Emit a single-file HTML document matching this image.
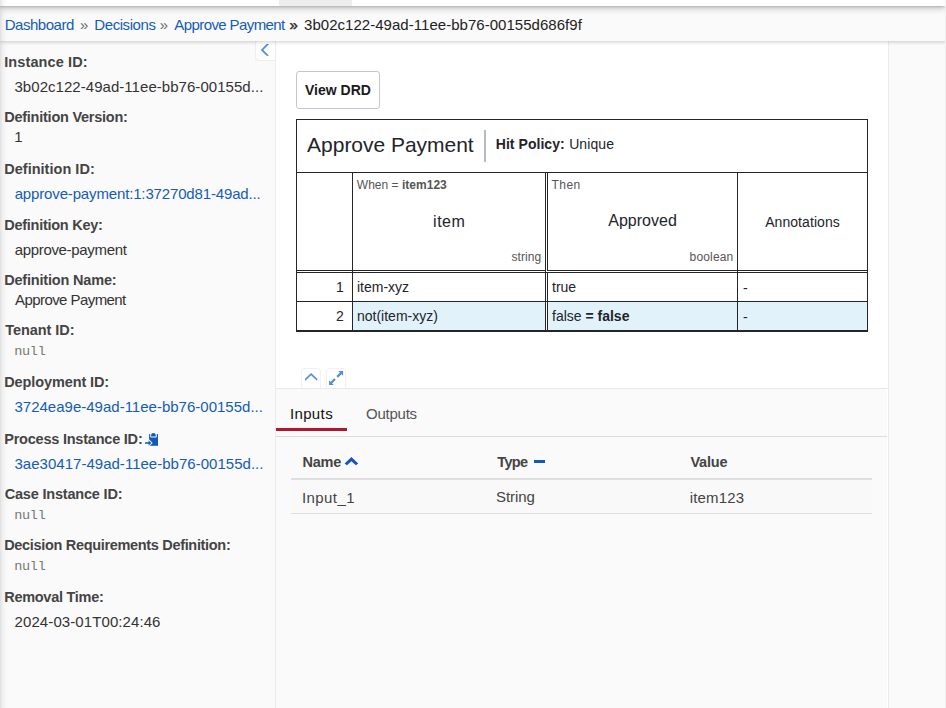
<!DOCTYPE html>
<html lang="en">
<head>
<meta charset="utf-8">
<title>Camunda Cockpit | Decision Instance</title>
<style>
html,body{margin:0;padding:0;}
body{width:946px;height:708px;overflow:hidden;position:relative;background:#fafafa;font-family:"Liberation Sans",Arial,sans-serif;font-size:15px;color:#333;}
a{color:#155cb5;text-decoration:none;}
.x{position:absolute;white-space:nowrap;z-index:50;}
.ln{position:absolute;display:block;z-index:45;}
.ic{position:absolute;z-index:50;}
#hdr{position:absolute;left:0;top:0;width:945px;height:6px;background:#fff;box-shadow:0 1px 3px rgba(0,0,0,.22),0 3px 6px rgba(0,0,0,.18);z-index:30;}
#hdr .act{position:absolute;left:279px;top:0;width:73px;height:6px;background:#eee;}
#crumbs{position:absolute;left:0;top:6px;width:946px;height:35px;background:#fafafa;box-shadow:0 1px 4px rgba(0,0,0,.2);z-index:20;}
.t{line-height:36px;font-size:15px;}
.t.g{color:#6a6a6a;}
.t.d{color:#222;}
.t.b{font-weight:bold;}
#side{position:absolute;left:0;top:41px;width:275px;height:667px;background:#fafafa;border-right:1px solid #ececec;z-index:5;}
#lsh{position:absolute;left:0;top:0;width:8px;height:708px;z-index:35;background:linear-gradient(to right,rgba(0,0,0,.11),rgba(0,0,0,.05) 25%,rgba(0,0,0,.015) 60%,rgba(0,0,0,0));}
.l{font-weight:bold;color:#444;font-size:14.5px;line-height:20px;}
.v{font-size:15px;line-height:20px;color:#333;}
.v.m{font-family:"Liberation Mono",monospace;font-size:13.5px;color:#777;}
#colb{position:absolute;left:255px;top:41px;width:20px;height:20px;background:#fefefe;border:1px solid #eee;border-top:0;border-right:0;border-radius:0 0 0 4px;z-index:6;box-sizing:border-box;}
#main{position:absolute;left:276px;top:41px;width:612px;height:347px;background:#fff;border-right:1px solid #ececec;}
#low{position:absolute;left:276px;top:388px;width:613px;height:320px;background:#fafafa;border-top:1px solid #e9e9e9;border-right:1px solid #ececec;box-sizing:border-box;}
#rightp{position:absolute;left:889px;top:41px;width:56px;height:667px;background:#fafafa;}
#edge{position:absolute;left:945px;top:0;width:1px;height:708px;background:#f0f0f0;z-index:40;}
#drdb{position:absolute;left:296px;top:71px;width:84px;height:38px;box-sizing:border-box;border:1px solid #c3c6d0;border-radius:3px;background:#fff;}
.drdt{font-weight:bold;font-size:14px;line-height:20px;color:#1a1a1a;}
.dm{font-size:14px;line-height:20px;color:#22242a;}
.tab{font-size:15px;line-height:20px;}
#tabline{position:absolute;left:276px;top:436px;width:612px;height:1px;background:#dcdcdc;}
#tabact{position:absolute;left:276px;top:428px;width:71px;height:3px;background:#b5152b;}
.th{font-weight:bold;font-size:14.5px;color:#444;line-height:20px;}
.td{font-size:15px;color:#444;line-height:20px;}
.btn2{position:absolute;top:368px;width:20px;height:20px;box-sizing:border-box;border:1px solid #f1f1f1;border-bottom:0;border-radius:4px 4px 0 0;background:#fff;}
</style>
</head>
<body>
<div id="hdr"><div class="act"></div></div>
<div id="crumbs"></div>
<div id="side"></div>
<div id="lsh"></div>
<div id="colb"><svg width="18" height="18" viewBox="0 0 18 18" style="position:absolute;left:0;top:0"><path d="M13.1 3 L10.6 3 L4.8 8.9 L10.6 14.8 L13.1 14.8 L7.3 8.9 Z" fill="#528ed5"/></svg></div>
<div id="main"></div>
<div id="low"></div>
<div id="rightp"></div>
<i class="ln" style="left:887px;top:389px;width:1px;height:319px;background:#fff;z-index:6"></i>
<div id="edge"></div>
<div id="drdb"></div>
<i class="ln" style="left:353px;top:302px;width:514px;height:28px;background:#e1f2fb"></i>
<i class="ln" style="left:296px;top:119px;width:572px;height:1px;background:#23252b"></i>
<i class="ln" style="left:296px;top:119px;width:1px;height:213px;background:#23252b"></i>
<i class="ln" style="left:867px;top:119px;width:1px;height:213px;background:#23252b"></i>
<i class="ln" style="left:296px;top:330px;width:572px;height:2px;background:#23252b"></i>
<i class="ln" style="left:296px;top:172px;width:572px;height:1px;background:#23252b"></i>
<i class="ln" style="left:296px;top:270px;width:572px;height:1px;background:#23252b"></i>
<i class="ln" style="left:296px;top:272px;width:572px;height:1px;background:#23252b"></i>
<i class="ln" style="left:296px;top:301px;width:572px;height:1px;background:#23252b"></i>
<i class="ln" style="left:352px;top:172px;width:1px;height:159px;background:#23252b"></i>
<i class="ln" style="left:545px;top:172px;width:1px;height:159px;background:#23252b"></i>
<i class="ln" style="left:547px;top:172px;width:1px;height:159px;background:#23252b"></i>
<i class="ln" style="left:737px;top:172px;width:1px;height:159px;background:#23252b"></i>
<i class="ln" style="left:484px;top:130px;width:2px;height:32px;background:#b6bbc8"></i>
<i class="ln" style="left:546px;top:302px;width:1px;height:28px;background:#fff"></i>
<i class="ln" style="left:546px;top:270px;width:1px;height:1px;background:#fff"></i>
<i class="ln" style="left:547px;top:271px;width:1px;height:1px;background:#fff"></i>
<div class="btn2" style="left:301px"><svg width="18" height="20" viewBox="0 0 18 20" style="position:absolute;left:0;top:0"><path d="M3 9.7 L9.1 3.9 L15.2 9.7 L15.2 11.9 L9.1 6.3 L3 11.9 Z" fill="#528ed5"/></svg></div>
<div class="btn2" style="left:326px"><svg width="18" height="20" viewBox="0 0 18 20" style="position:absolute;left:0;top:0"><path d="M16.1 2 L11.4 2 L16.1 6.7 Z M2.1 15.9 L2.1 11.2 L6.8 15.9 Z" fill="#528ed5"/><path d="M10.2 7.9 L14 4.1 M8 10 L4.2 13.8" fill="none" stroke="#528ed5" stroke-width="2.2"/></svg></div>
<svg class="ic" style="left:344px;top:456px" width="16" height="11" viewBox="0 0 16 11"><path d="M7.4 0.9 L14.2 7.4 L11.8 9.2 L7.4 5.2 L3 9.2 L0.6 7.4 Z" fill="#1358b6"/></svg>
<i class="ln" style="left:533.7px;top:460px;width:11.2px;height:3px;background:#1358b6;z-index:50"></i>
<svg class="ic" style="left:144px;top:432px" width="16" height="15" viewBox="0 0 16 15"><path d="M5.1 2.1 H14 V13.8 H5.1 Z" fill="#1358b6"/><path d="M6.2 1.8 H12.8 V4.6 Q12.8 5.6 11.8 5.6 H7.2 Q6.2 5.6 6.2 4.6 Z" fill="#fafafa"/><path d="M7.1 4.6 V3 Q7.1 0.9 9.4 0.9 Q11.7 0.9 11.7 3 V4.6 Z" fill="#1358b6"/><path d="M4.3 6.6 L8.7 10.9 L4.3 15.2 Z" fill="#fafafa"/><path d="M1 10.15 H4.6 V8.4 L7.4 10.9 L4.6 13.4 V11.65 H1 Z" fill="#1358b6"/></svg>
<div id="tabact"></div>
<div id="tabline"></div>
<i class="ln" style="left:291px;top:478px;width:581px;height:2px;background:#dedede"></i>
<i class="ln" style="left:291px;top:480px;width:581px;height:33px;background:#f9f9f9"></i>
<i class="ln" style="left:291px;top:513px;width:581px;height:1px;background:#dedede"></i>
<div id="c1" class="x t" style="left:4.75px;top:7px;letter-spacing:-0.488px;"><a>Dashboard</a></div>
<div id="c2" class="x t g" style="left:80.03px;top:7px;">»</div>
<div id="c3" class="x t" style="left:94.31px;top:7px;letter-spacing:-0.420px;"><a>Decisions</a></div>
<div id="c4" class="x t g" style="left:159.85px;top:7px;">»</div>
<div id="c5" class="x t" style="left:174.33px;top:7px;letter-spacing:-0.594px;"><a>Approve Payment</a></div>
<div id="c6" class="x t d" style="left:289.44px;top:7px;-webkit-text-stroke:0.35px #222">»</div>
<div id="c7" class="x t d" style="left:304.04px;top:7px;letter-spacing:0.034px;">3b02c122-49ad-11ee-bb76-00155d686f9f</div>
<div id="l0" class="x l" style="left:4.20px;top:52px;letter-spacing:0.113px;">Instance ID:</div>
<div id="l1" class="x l" style="left:4.20px;top:107px;letter-spacing:-0.243px;">Definition Version:</div>
<div id="l2" class="x l" style="left:4.20px;top:159px;letter-spacing:0.025px;">Definition ID:</div>
<div id="l3" class="x l" style="left:4.20px;top:215px;letter-spacing:-0.259px;">Definition Key:</div>
<div id="l4" class="x l" style="left:4.20px;top:270px;letter-spacing:-0.184px;">Definition Name:</div>
<div id="l5" class="x l" style="left:5.15px;top:320px;letter-spacing:-0.046px;">Tenant ID:</div>
<div id="l6" class="x l" style="left:4.20px;top:372px;letter-spacing:-0.104px;">Deployment ID:</div>
<div id="l7" class="x l" style="left:4.20px;top:429px;letter-spacing:-0.217px;">Process Instance ID:</div>
<div id="l8" class="x l" style="left:4.64px;top:484px;letter-spacing:-0.186px;">Case Instance ID:</div>
<div id="l9" class="x l" style="left:4.20px;top:535px;letter-spacing:-0.323px;">Decision Requirements Definition:</div>
<div id="l10" class="x l" style="left:4.20px;top:587px;letter-spacing:-0.277px;">Removal Time:</div>
<div id="v0" class="x v" style="left:14.47px;top:77px;letter-spacing:0.044px;">3b02c122-49ad-11ee-bb76-00155d...</div>
<div id="v1" class="x v" style="left:14.17px;top:127px;">1</div>
<div id="v2" class="x v" style="left:14.67px;top:184px;letter-spacing:-0.149px;"><a>approve-payment:1:37270d81-49ad...</a></div>
<div id="v3" class="x v" style="left:14.67px;top:240px;letter-spacing:-0.324px;">approve-payment</div>
<div id="v4" class="x v" style="left:15.00px;top:290px;letter-spacing:-0.568px;">Approve Payment</div>
<div id="v5" class="x v m" style="left:14.14px;top:341.5px;letter-spacing:-0.246px;">null</div>
<div id="v6" class="x v" style="left:14.47px;top:397px;letter-spacing:0.005px;"><a>3724ea9e-49ad-11ee-bb76-00155d...</a></div>
<div id="v7" class="x v" style="left:14.47px;top:454px;letter-spacing:0.023px;"><a>3ae30417-49ad-11ee-bb76-00155d...</a></div>
<div id="v8" class="x v m" style="left:14.14px;top:505.5px;letter-spacing:-0.246px;">null</div>
<div id="v9" class="x v m" style="left:14.14px;top:556.5px;letter-spacing:-0.246px;">null</div>
<div id="v10" class="x v" style="left:14.57px;top:612px;letter-spacing:0.090px;">2024-03-01T00:24:46</div>
<div id="tb1" class="x tab" style="left:289.88px;top:404px;letter-spacing:0.381px;color:#111">Inputs</div>
<div id="tb2" class="x tab" style="left:366.06px;top:404px;letter-spacing:-0.245px;color:#555">Outputs</div>
<div id="h1" class="x th" style="left:302.42px;top:452px;letter-spacing:-0.176px;">Name</div>
<div id="h2" class="x th" style="left:497.22px;top:452px;letter-spacing:-0.617px;">Type</div>
<div id="h3" class="x th" style="left:690.43px;top:452px;letter-spacing:-0.172px;">Value</div>
<div id="d1" class="x td" style="left:302.00px;top:488px;letter-spacing:0.418px;">Input_1</div>
<div id="d2" class="x td" style="left:495.95px;top:487px;letter-spacing:-0.047px;">String</div>
<div id="d3" class="x td" style="left:689.64px;top:488px;letter-spacing:0.186px;">item123</div>
<div id="drd" class="x drdt" style="left:305.00px;top:80px;">View DRD</div>
<div id="m1" class="x dm" style="left:307.11px;top:132px;letter-spacing:-0.027px;font-size:21px;line-height:26px">Approve Payment</div>
<div id="m2" class="x dm" style="left:495.75px;top:134px;letter-spacing:0.048px;font-weight:bold;font-size:14px">Hit Policy:</div>
<div id="m3" class="x dm" style="left:569.17px;top:134px;letter-spacing:0.098px;font-size:14px">Unique</div>
<div id="m4" class="x dm" style="left:356.84px;top:177px;letter-spacing:0.018px;font-size:12px;line-height:16px;color:#555">When = <b>item123</b></div>
<div id="m5" class="x dm" style="left:433.04px;top:211.5px;letter-spacing:0.541px;font-size:16px">item</div>
<div id="m6" class="x dm" style="left:511.42px;top:247px;letter-spacing:0.086px;font-size:12px;color:#555">string</div>
<div id="m7" class="x dm" style="left:551.49px;top:177px;letter-spacing:0.460px;font-size:12px;line-height:16px;color:#555">Then</div>
<div id="m8" class="x dm" style="left:608.18px;top:211px;letter-spacing:0.036px;font-size:16px">Approved</div>
<div id="m9" class="x dm" style="left:689.57px;top:247px;letter-spacing:0.169px;font-size:12px;color:#555">boolean</div>
<div id="m10" class="x dm" style="left:765.15px;top:212px;letter-spacing:0.068px;font-size:14px">Annotations</div>
<div id="m11" class="x dm" style="left:336.00px;top:277px;font-size:14px">1</div>
<div id="m12" class="x dm" style="left:357.00px;top:277px;font-size:14px">item-xyz</div>
<div id="m13" class="x dm" style="left:552.00px;top:277px;font-size:14px">true</div>
<div id="m14" class="x dm" style="left:743.00px;top:278px;font-size:14px">-</div>
<div id="m15" class="x dm" style="left:336.00px;top:306px;font-size:14px">2</div>
<div id="m16" class="x dm" style="left:357.00px;top:306px;font-size:14px">not(item-xyz)</div>
<div id="m17" class="x dm" style="left:552.00px;top:306px;font-size:14px">false <b>= false</b></div>
<div id="m18" class="x dm" style="left:743.00px;top:307px;font-size:14px">-</div>
</body>
</html>
